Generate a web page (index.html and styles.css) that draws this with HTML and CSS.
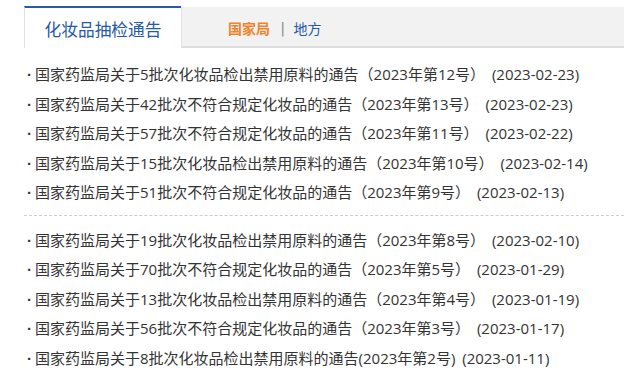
FILE: index.html
```html
<!DOCTYPE html>
<html lang="zh">
<head>
<meta charset="utf-8">
<title>化妆品抽检通告</title>
<link rel="stylesheet" href="styles.css">
</head>
<body>
<div class="panel">
  <div class="tabs">
    <div class="tab-active">化妆品抽检通告</div>
    <div class="tab-rest">
      <span class="sub-on">国家局</span>
      <span class="sep">|</span>
      <span class="sub-off">地方</span>
    </div>
  </div>
  <ul class="list">
    <li>国家药监局关于5批次化妆品检出禁用原料的通告（2023年第12号） (2023-02-23)</li>
    <li>国家药监局关于42批次不符合规定化妆品的通告（2023年第13号） (2023-02-23)</li>
    <li>国家药监局关于57批次不符合规定化妆品的通告（2023年第11号） (2023-02-22)</li>
    <li>国家药监局关于15批次化妆品检出禁用原料的通告（2023年第10号） (2023-02-14)</li>
    <li>国家药监局关于51批次不符合规定化妆品的通告（2023年第9号） (2023-02-13)</li>
  </ul>
  <div class="divider"></div>
  <ul class="list list-second">
    <li>国家药监局关于19批次化妆品检出禁用原料的通告（2023年第8号） (2023-02-10)</li>
    <li>国家药监局关于70批次不符合规定化妆品的通告（2023年第5号） (2023-01-29)</li>
    <li>国家药监局关于13批次化妆品检出禁用原料的通告（2023年第4号） (2023-01-19)</li>
    <li>国家药监局关于56批次不符合规定化妆品的通告（2023年第3号） (2023-01-17)</li>
    <li>国家药监局关于8批次化妆品检出禁用原料的通告(2023年第2号) (2023-01-11)</li>
  </ul>
</div>
</body>
</html>
```
FILE: styles.css
```css
html, body {
  margin: 0;
  padding: 0;
  background: #ffffff;
}
body {
  font-family: "Noto Sans CJK SC", "Noto Sans", sans-serif;
  color: #333333;
}
.panel {
  padding: 6px 0 0 24px;
}
.tabs {
  display: flex;
  height: 42px;
}
.tab-active {
  width: 157px;
  box-sizing: border-box;
  border-top: 2px solid #2b5aa6;
  border-left: 1px solid #e2e2e2;
  background: #ffffff;
  color: #2458a8;
  font-size: 16.7px;
  line-height: 40px;
  text-align: center;
  padding-top: 1px;
}
.tab-rest {
  flex: 1;
  margin-top: 1px;
  background: #f2f2f2;
  border-left: 1px solid #e0e0e0;
  border-bottom: 2px solid #dddddd;
  display: flex;
  align-items: center;
  padding-left: 46px;
  font-size: 14px;
  padding-top: 2px;
}
.sub-on {
  color: #f3822a;
  font-weight: bold;
}
.sep {
  color: #3d6b58;
  margin: 0 9px 0 11px;
  font-size: 13px;
}
.sub-off {
  color: #2458a8;
}
.list {
  list-style: none;
  margin: 12px 0 0 0;
  padding: 0;
}
.list li {
  font-family: "Open Sans", "Noto Sans CJK SC", sans-serif;
  font-size: 15px;
  line-height: 29.5px;
  height: 29.5px;
  white-space: nowrap;
  color: #333333;
  word-spacing: 3px;
}
.list li::before {
  content: "·";
  font-family: "Liberation Sans", sans-serif;
  display: inline-block;
  width: 8px;
  margin-left: 3px;
  font-weight: bold;
}
.divider {
  margin: 7px 0 10px 0;
  border-top: 1px dashed #cccccc;
}
.list-second {
  margin-top: 0;
}
```
